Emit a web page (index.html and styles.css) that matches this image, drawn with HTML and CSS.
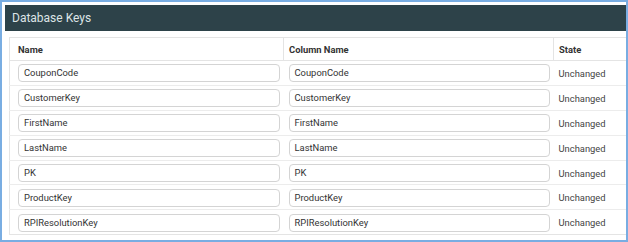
FILE: index.html
```html
<!DOCTYPE html>
<html>
<head>
<meta charset="utf-8">
<link rel="stylesheet" href="styles.css">
</head>
<body>
<div class="frame">
  <div class="panel-head">Database Keys</div>
  <div class="panel-body">
    <table class="keys">
      <colgroup>
        <col class="c-name">
        <col class="c-col">
        <col class="c-state">
      </colgroup>
      <thead>
        <tr><th class="first">Name</th><th>Column Name</th><th class="last">State</th></tr>
      </thead>
      <tbody>
        <tr><td class="first"><div class="field">CouponCode</div></td><td><div class="field">CouponCode</div></td><td class="state">Unchanged</td></tr>
        <tr><td class="first"><div class="field">CustomerKey</div></td><td><div class="field">CustomerKey</div></td><td class="state">Unchanged</td></tr>
        <tr><td class="first"><div class="field">FirstName</div></td><td><div class="field">FirstName</div></td><td class="state">Unchanged</td></tr>
        <tr><td class="first"><div class="field">LastName</div></td><td><div class="field">LastName</div></td><td class="state">Unchanged</td></tr>
        <tr><td class="first"><div class="field">PK</div></td><td><div class="field">PK</div></td><td class="state">Unchanged</td></tr>
        <tr><td class="first"><div class="field">ProductKey</div></td><td><div class="field">ProductKey</div></td><td class="state">Unchanged</td></tr>
        <tr><td class="first"><div class="field">RPIResolutionKey</div></td><td><div class="field">RPIResolutionKey</div></td><td class="state">Unchanged</td></tr>
      </tbody>
    </table>
  </div>
</div>
</body>
</html>
```
FILE: styles.css
```css
html, body {
  margin: 0;
  padding: 0;
  background: #ffffff;
}
body {
  font-family: Roboto, "Liberation Sans", sans-serif;
  color: #333333;
}
.frame {
  width: 628px;
  height: 242px;
  box-sizing: border-box;
  border: 2px solid #79ade2;
  padding: 3px 0 0 3px;
  background: #ffffff;
  overflow: hidden;
}
.panel-head {
  height: 26px;
  background: #2d4249;
  color: #dde4e6;
  font-size: 12px;
  line-height: 27px;
  padding-left: 7px;
}
.panel-body {
  padding: 6px 0 0 4px;
}
.keys {
  width: 617px;
  border-collapse: collapse;
  table-layout: fixed;
  border: 1px solid #e4e4e4;
  border-right: none;
  font-size: 9.4px;
}
.c-name { width: 274px; }
.c-col { width: 270px; }
.c-state { width: 73px; }
.keys th {
  height: 23px;
  box-sizing: border-box;
  text-align: left;
  font-weight: 700;
  color: #333333;
  padding: 1px 0 0 5px;
  border-right: 1px solid #e4e4e4;
  border-bottom: 1px solid #e4e4e4;
}
.keys th.first { padding-left: 8px; }
.keys th.last { border-right: none; }
.keys td {
  height: 24.9px;
  box-sizing: border-box;
  padding: 1px 4px 0 5px;
  border-top: 1px solid #ececec;
  vertical-align: middle;
}
.keys td.first { padding-left: 8px; }
.keys tbody tr:first-child td { border-top: none; }
.field {
  height: 18px;
  box-sizing: border-box;
  border: 1px solid #d4d4d4;
  border-radius: 4px;
  padding-left: 5px;
  line-height: 16px;
  color: #333333;
  background: #ffffff;
}
.keys td.state {
  padding-left: 5px;
  color: #444444;
}
```
